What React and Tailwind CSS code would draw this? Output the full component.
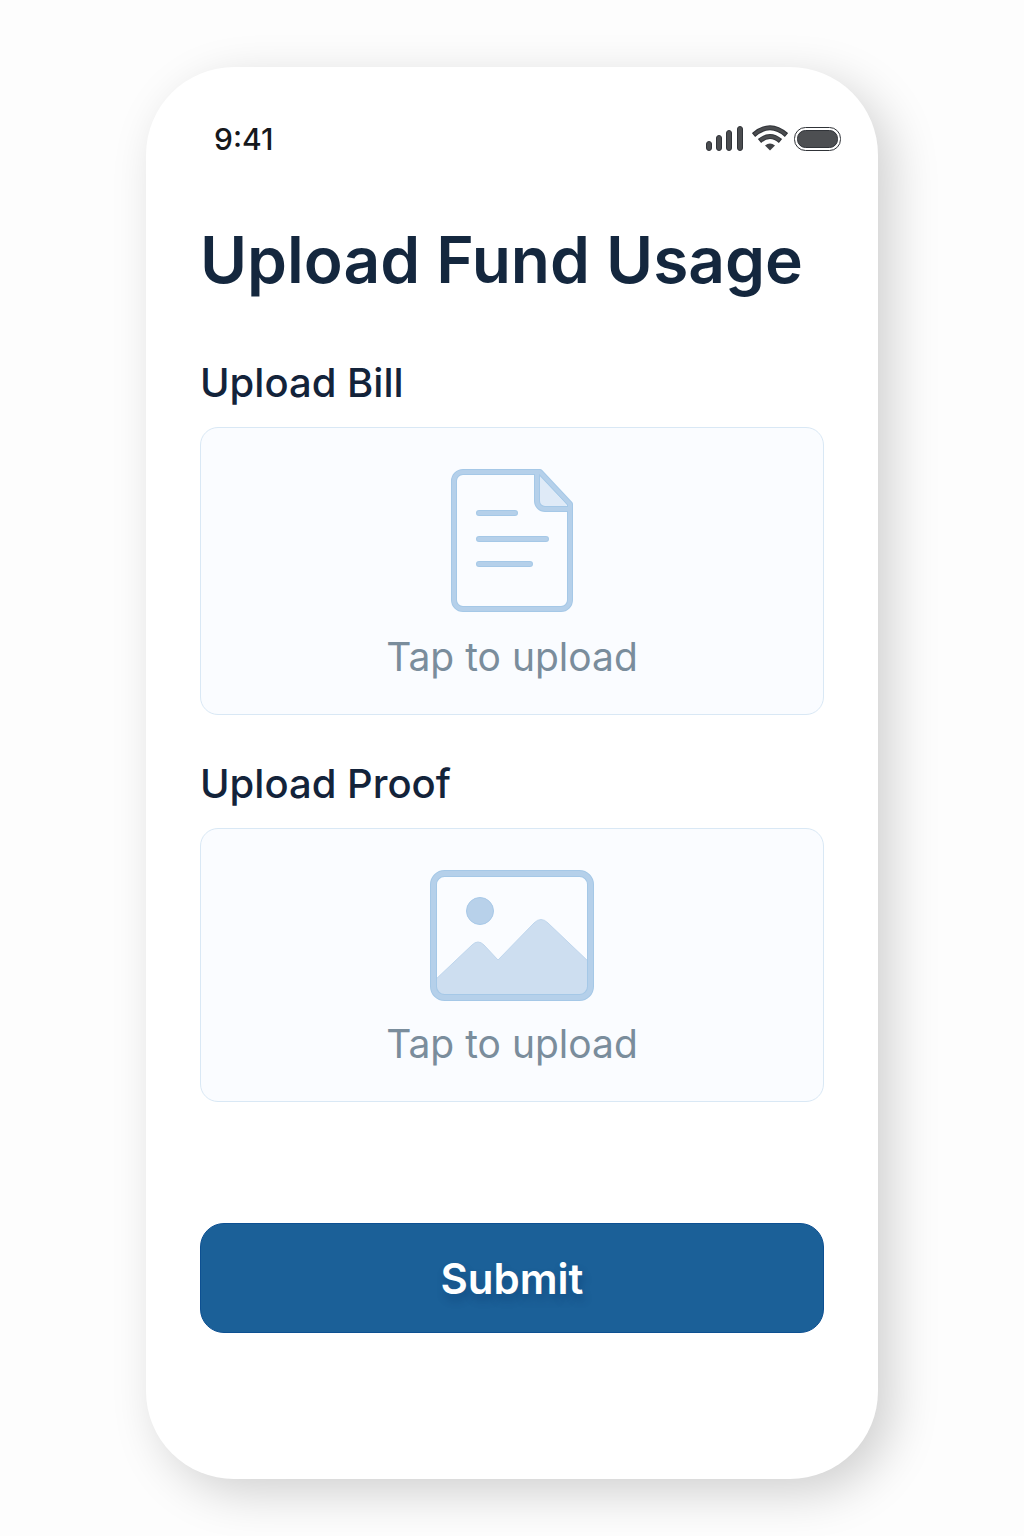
function StatusBar() {
  return (
    <div className="-mr-[18px] flex items-center justify-between pl-3.5">
      <span className="text-[30px] leading-9 font-medium text-[#16181c]">9:41</span>
      <div className="flex items-center gap-1.5">
        <svg width="40" height="26" viewBox="0 0 40 26" fill="#4b4d50" stroke="#303338" aria-hidden="true">
          <rect x="0.5" y="15.5" width="5" height="9" rx="2.5" />
          <rect x="10.5" y="9.5" width="5" height="15" rx="2.5" />
          <rect x="20.5" y="4.5" width="5" height="20" rx="2.5" />
          <rect x="31.5" y="0.5" width="5" height="24" rx="2.5" />
        </svg>
        <svg width="36" height="28" viewBox="0 -1 36 28" fill="none" aria-hidden="true">
          <g stroke="#303338" strokeWidth="5">
            <path d="M1.5 9Q18 -5.5 34.5 9" />
            <path d="M7.5 15Q18 6 28.5 15" />
          </g>
          <g stroke="#4b4d50" strokeWidth="3">
            <path d="M2.3 8.3Q18 -4.8 33.7 8.3" />
            <path d="M8.3 14.3Q18 6.7 27.7 14.3" />
          </g>
          <path d="M18 24.5l-5-5q5-4 10 0z" fill="#404246" />
        </svg>
        <svg width="48" height="26" viewBox="0 0 48 26" fill="none" stroke="#303338" aria-hidden="true">
          <rect x="0.5" y="1.5" width="46" height="23" rx="11" />
          <rect x="3.5" y="4.5" width="40" height="17" rx="8" fill="#4d4f52" />
        </svg>
      </div>
    </div>
  );
}

function DocumentIcon() {
  return (
    <svg width="124" height="146" viewBox="0 0 124 146" fill="none" strokeLinejoin="round" strokeLinecap="round" aria-hidden="true">
      <path d="M87 5v28a8 8 0 0 0 8 8h25z" fill="#dfeaf7" />
      {/* darker rim first, lighter core on top */}
      <g stroke="#a5c8e7" strokeWidth="6">
        <path d="M13 4h77l30 32v96a9 9 0 0 1-9 9H13a9 9 0 0 1-9-9V13a9 9 0 0 1 9-9z" />
        <path d="M87 5v28a8 8 0 0 0 8 8h25M29 45h36M29 71h67M29 96h51" />
      </g>
      <g stroke="#b5d0ea" strokeWidth="4">
        <path d="M13 4h77l30 32v96a9 9 0 0 1-9 9H13a9 9 0 0 1-9-9V13a9 9 0 0 1 9-9z" />
        <path d="M87 5v28a8 8 0 0 0 8 8h25M29 45h36M29 71h67M29 96h51" />
      </g>
    </svg>
  );
}

function ImageIcon() {
  return (
    <svg width="164" height="132" viewBox="0 -1 164 132" fill="none" aria-hidden="true">
      <path d="M4 111l38-36q6-6 12 0l14 15 36-37q7-7 14 0l42 40v28a8 8 0 0 1-8 8H12a8 8 0 0 1-8-8z" fill="#cddef0" stroke="#bfd6ed" />
      <circle cx="50" cy="41" r="13.5" fill="#b8d1ea" stroke="#a8c9e8" />
      <rect x="3.5" y="3.5" width="157" height="124" rx="11" stroke="#a5c8e7" strokeWidth="7" />
      <rect x="3.5" y="3.5" width="157" height="124" rx="11" stroke="#b5d0ea" strokeWidth="5" />
    </svg>
  );
}

function UploadField({ id, label, icon }) {
  return (
    <section>
      <h2 id={id} className="mb-[19px] text-[40px] leading-[50px] font-medium text-[#13233a]">
        {label}
      </h2>
      <button
        type="button"
        aria-describedby={id}
        className="flex w-full flex-col items-center rounded-[18px] border border-[#d9e8f5] bg-[#fafcff] pt-10 pb-8"
      >
        {icon}
        <span className="mt-[18px] text-[39px] leading-[50px] text-[#7a8d9c]">Tap to upload</span>
      </button>
    </section>
  );
}

export default function App() {
  return (
    <div className="min-h-screen bg-[#fdfdfd] px-[146px] pt-[67px] pb-14 font-['Inter',sans-serif]">
      <main className="rounded-[88px] bg-white px-[54px] pt-[54px] pb-[146px] shadow-[14px_14px_48px_rgba(0,0,0,0.18)]">
        <StatusBar />
        <h1 className="mt-[61px] text-[64px] leading-[84px] font-semibold whitespace-nowrap text-[#14273e]">
          Upload Fund Usage
        </h1>
        <form className="mt-14" onSubmit={(e) => e.preventDefault()}>
          <div className="space-y-11">
            <UploadField id="bill" label="Upload Bill" icon={<DocumentIcon />} />
            <UploadField id="proof" label="Upload Proof" icon={<ImageIcon />} />
          </div>
          <button
            type="submit"
            className="mt-[121px] h-[110px] w-full rounded-[24px] border border-[#0d5092] bg-[#1b6098] text-[42px] font-semibold text-white text-shadow-[2px_6px_8px_rgba(0,40,90,0.3)]"
          >
            Submit
          </button>
        </form>
      </main>
    </div>
  );
}
